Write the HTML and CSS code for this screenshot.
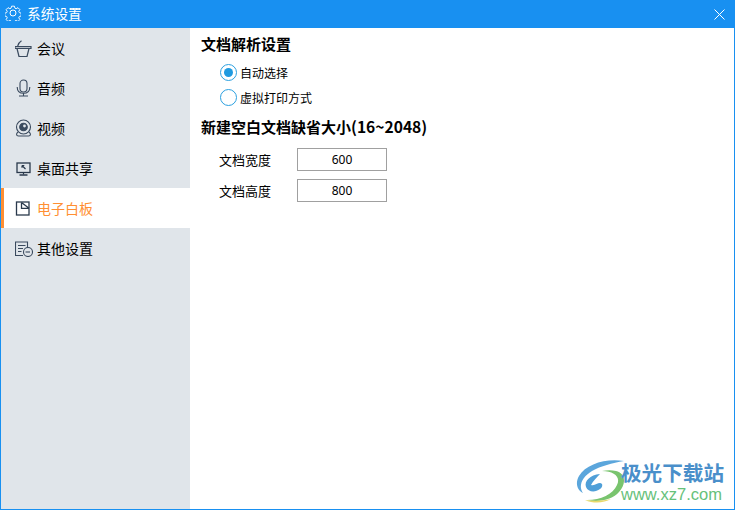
FILE: index.html
```html
<!DOCTYPE html>
<html lang="zh-CN">
<head>
<meta charset="utf-8">
<title>系统设置</title>
<link rel="stylesheet" href="styles.css">
</head>
<body>
<div class="window">
  <header class="titlebar">
    <svg class="title-icon" width="16" height="16" viewBox="0 0 16 16" fill="none" stroke="#fff" stroke-width="1">
      <circle cx="8" cy="8" r="3"/>
      <path d="M6.500.8h3l.5 2.100 1.300.6 1.900-1.100 2 2-1.100 1.900.6 1.300 2 .6v3l-2 .5-.6 1.300 1.100 1.900-2 2-1.900-1.100-1.300.6-.5 2h-3l-.5-2-1.300-.6-1.900 1.100-2-2 1.100-1.900-.6-1.300-2-.5v-3l2-.6.6-1.300-1.100-1.900 2-2 1.900 1.100 1.300-.6z" transform="translate(.4 .4) scale(.95)"/>
    </svg>
    <span class="title-text">系统设置</span>
    <svg class="close-icon" width="11" height="11" viewBox="0 0 11 11" stroke="#fff" stroke-width="1"><path d="M.5.5l10 10M10.500.5l-10 10"/></svg>
  </header>
  <div class="body">
    <nav class="sidebar">
      <div class="nav-item">
        <svg class="nav-icon" viewBox="0 0 18 18" fill="none" stroke="#3a4a5e" stroke-width="1.200"><path d="M0 7.600h16v1.900H0zM2 9.500l2 8h8l2-8M2.500 7.500C3 5 4.500 3 6.500 1.800"/></svg>
        <span>会议</span>
      </div>
      <div class="nav-item">
        <svg class="nav-icon" viewBox="0 0 18 18" fill="none" stroke="#3a4a5e" stroke-width="1.100"><rect x="5" y="1" width="7" height="12" rx="3.500"/><path d="M2.200 8c0 4 2.500 6.300 6.300 6.300s6.300-2.300 6.300-6.300M8.500 14.300v2.500M4 17h9"/></svg>
        <span>音频</span>
      </div>
      <div class="nav-item">
        <svg class="nav-icon" viewBox="0 0 18 18" fill="none" stroke="#3a4a5e" stroke-width="1.100"><circle cx="8.500" cy="8" r="7"/><circle cx="8.500" cy="8" r="3.800" fill="#3a4a5e"/><circle cx="9.500" cy="7" r="1.400" fill="#e0e5ea" stroke="none"/><path d="M3 13c-2 1.500-2 4 .5 4h10c2.500 0 2.500-2.500.5-4"/></svg>
        <span>视频</span>
      </div>
      <div class="nav-item">
        <svg class="nav-icon" viewBox="0 0 18 18" fill="none" stroke="#2a394c" stroke-width="1.300"><rect x="2" y="4" width="13" height="9.500"/><path d="M7 6.500l3.500 3.500M7 6.500h2.300M7 6.500v2.300M8.500 13.500v2" stroke-width="1.200"/><path d="M4.500 16h8" stroke-width="1.500"/></svg>
        <span>桌面共享</span>
      </div>
      <div class="nav-item active">
        <svg class="nav-icon" viewBox="0 0 18 18" fill="none" stroke="#2a394c" stroke-width="1.300"><rect x="1.500" y="3" width="12.500" height="13"/><path d="M6.500 3.500v5.800h7.500M6.500 3.500l7.500 5.800"/></svg>
        <span>电子白板</span>
      </div>
      <div class="nav-item">
        <svg class="nav-icon" viewBox="0 0 18 18" fill="none" stroke="#3a4a5e" stroke-width="1.100"><path d="M8 16.500H.5V3h12v6"/><path d="M3 6.500h7.500M3 9.500h5M3 12.500h3.500"/><circle cx="13" cy="13" r="4.500" fill="#e0e5ea"/><path d="M10.500 13H15"/></svg>
        <span>其他设置</span>
      </div>
    </nav>
    <main class="content">
      <h2 class="section-title">文档解析设置</h2>
      <div class="radio-group">
        <label class="radio-row"><span class="radio checked"></span><span>自动选择</span></label>
        <label class="radio-row"><span class="radio"></span><span>虚拟打印方式</span></label>
      </div>
      <h2 class="section-title second">新建空白文档缺省大小<span class="range">(16~2048)</span></h2>
      <div class="field-group">
        <div class="field"><span class="field-label">文档宽度</span><div class="field-input">600</div></div>
        <div class="field"><span class="field-label">文档高度</span><div class="field-input">800</div></div>
      </div>
      <div class="watermark">
        <svg class="wm-logo" width="48" height="46" viewBox="0 0 48 46" fill="none">
          <path d="M48 2C30-1 10 5 3 17c-4 7-2 14 4 17C2 27 6 18 16 12 25 7 36 4 48 2z" fill="#5ba6dc"/>
          <path d="M24 15c-10 1-16 7-14 13 2 5 9 6 14 2 3-2 3-6 0-6-3 0-5 3-9 2 2-4 6-8 9-11z" fill="#4f9fd8"/>
          <path d="M26 12c12 0 19 6 15 14-4 9-16 15-30 15 13 3 26-1 32-8 8-9 6-19-3-21-4-1-9-1-14 0z" fill="#79c46e"/>
          <path d="M9 41c9 4 19 3 26-1-8 2-17 2-26 1z" fill="#e8d96a"/>
        </svg>
        <div class="wm-text">
          <div class="wm-name">极光下载站</div>
          <div class="wm-url">www.xz7.com</div>
        </div>
      </div>
    </main>
  </div>
</div>
</body>
</html>
```
FILE: styles.css
```css
* { box-sizing: border-box; }
html, body { margin: 0; padding: 0; }
body {
  width: 735px;
  height: 510px;
  overflow: hidden;
  font-family: "Noto Sans CJK SC", "Noto Sans", sans-serif;
  color: #000;
  background: #fff;
}
.window {
  width: 735px;
  height: 510px;
  display: flex;
  flex-direction: column;
}
.titlebar {
  height: 28px;
  flex: none;
  background: #1890f1;
  color: #fff;
  display: flex;
  align-items: center;
  padding: 0 10px 2px 5px;
  font-size: 13.700px;
}
.title-icon { flex: none; margin-right: 6px; }
.title-text { flex: 1; }
.close-icon { flex: none; margin-top: 2px; }
.body {
  flex: 1;
  display: flex;
  border: 1px solid #1890f1;
  border-top: 0;
  min-height: 0;
}
.sidebar {
  width: 189px;
  flex: none;
  background: #e0e5ea;
}
.nav-item {
  height: 40px;
  display: flex;
  align-items: center;
  padding-left: 14px;
  font-size: 14px;
  gap: 4px;
}
.nav-icon { width: 18px; height: 18px; flex: none; }
.nav-item.active {
  background: #fff;
  color: #ff8f33;
  border-left: 3px solid #ff8f33;
  padding-left: 11px;
}
.content {
  flex: 1;
  position: relative;
  padding: 6px 0 0 11px;
}
.section-title {
  margin: 0;
  font-size: 15px;
  font-weight: 700;
  line-height: 20px;
}
.section-title.second { margin-top: 10px; }
.range { font-size: 15.600px; }
.radio-group {
  margin: 10px 0 0 19px;
  display: flex;
  flex-direction: column;
  gap: 8px;
}
.radio-row {
  display: flex;
  align-items: center;
  font-size: 12px;
  height: 17px;
  gap: 3px;
}
.radio {
  width: 17px;
  height: 17px;
  border: 1.300px solid #2ba0e0;
  border-radius: 50%;
  display: flex;
  align-items: center;
  justify-content: center;
  flex: none;
}
.radio.checked::after {
  content: "";
  width: 9px;
  height: 9px;
  border-radius: 50%;
  background: #1f9ae0;
}
.field-group {
  margin: 11px 0 0 18px;
  display: flex;
  flex-direction: column;
  gap: 8px;
}
.field { display: flex; align-items: center; height: 23px; }
.field-label { width: 78px; font-size: 13px; }
.field-input {
  width: 90px;
  height: 23px;
  border: 1px solid #a0a0a0;
  font-family: "Noto Sans", sans-serif;
  font-size: 12px;
  display: flex;
  align-items: center;
  justify-content: center;
}
.watermark {
  position: absolute;
  right: 10px;
  bottom: 4px;
  display: flex;
  align-items: center;
}
.wm-logo { flex: none; margin-right: -3px; }
.wm-text { display: flex; flex-direction: column; align-items: flex-start; gap: 2px; }
.wm-name {
  font-size: 20.600px;
  line-height: 22px;
  font-weight: 700;
  color: #4a8fca;
}
.wm-url {
  font-family: "Liberation Sans", sans-serif;
  font-size: 16.500px;
  line-height: 18px;
  color: #66c17a;
}
```
